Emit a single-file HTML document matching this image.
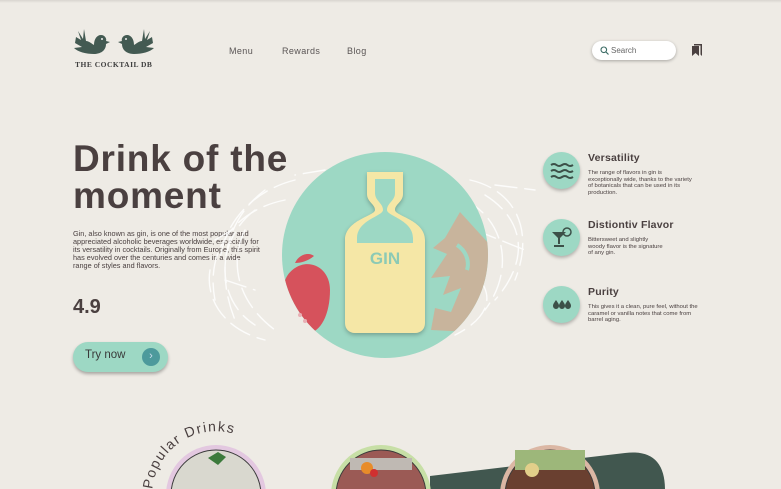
<!DOCTYPE html>
<html><head><meta charset="utf-8"><style>
*{margin:0;padding:0;box-sizing:border-box}
body{width:781px;height:489px;overflow:hidden;background:#eeebe5;font-family:"Liberation Sans",sans-serif;color:#4a4040;position:relative}
.abs{position:absolute}
.nav{font-size:9px;color:#5a5555;top:46px;letter-spacing:.4px}
h1{position:absolute;left:73px;top:140px;font-size:37px;line-height:37px;font-weight:bold;color:#4a4040;letter-spacing:.8px}
.desc{left:73px;top:230px;width:188px;font-size:7.3px;line-height:8px;color:#4a4040}
.feat h3{font-size:10.5px;font-weight:bold;color:#4a4040;margin-bottom:6px;letter-spacing:.2px;white-space:nowrap}
.feat p{font-size:5.9px;line-height:6.5px;color:#4a4040}
.ic{width:37px;height:37px;border-radius:50%;background:#9dd8c4;box-shadow:0 2px 3px rgba(0,0,0,.25)}
</style></head><body>
<div class="abs" style="left:0;top:0;width:781px;height:3px;background:linear-gradient(#d8d5d0,#eeebe5)"></div>
<svg class="abs" style="left:72px;top:27px" width="84" height="30" viewBox="0 0 84 30">
<g fill="#435a52">
<path d="M4 10 L9 13 L6 4 L11 12 L12 2 L14 14 C17 14 20 17 22 18 C22 12 25 8 29 8 C33 8 35 12 34 14 L38 15 L34 17 C34 24 28 27 22 27 C14 27 6 25 2 21 L10 20 L3 16 Z"/>
<path d="M80 10 L75 13 L78 4 L73 12 L72 2 L70 14 C67 14 64 17 62 18 C62 12 59 8 55 8 C51 8 49 12 50 14 L46 15 L50 17 C50 24 56 27 62 27 C70 27 78 25 82 21 L74 20 L81 16 Z"/>
</g><circle cx="30" cy="12" r="1" fill="#eee"/><circle cx="54" cy="12" r="1" fill="#eee"/></svg>
<div class="abs" style="left:75px;top:60px;font-family:'Liberation Serif',serif;font-weight:bold;font-size:7.5px;color:#3e3e3e;letter-spacing:.5px">THE COCKTAIL DB</div>
<div class="abs nav" style="left:229px">Menu</div>
<div class="abs nav" style="left:282px">Rewards</div>
<div class="abs nav" style="left:347px">Blog</div>
<div class="abs" style="left:592px;top:41px;width:84px;height:19px;border-radius:10px;background:#fff;box-shadow:0 1px 3px rgba(0,0,0,.3)"></div>
<svg class="abs" style="left:600px;top:46px" width="9" height="9"><circle cx="3.8" cy="3.8" r="2.8" fill="none" stroke="#3d6d66" stroke-width="1.1"/><path d="M6 6 L8.5 8.5" stroke="#3d6d66" stroke-width="1.2"/></svg>
<div class="abs" style="left:611px;top:46px;font-size:8px;color:#666">Search</div>
<svg class="abs" style="left:691px;top:43px" width="12" height="14"><path d="M3 1h8v12l-1.5-1.5V2.5H3z" fill="#4a4040"/><path d="M1 3h7v10l-3.5-3L1 13z" fill="#4a4040"/></svg>
<h1>Drink of the<br>moment</h1>
<div class="abs desc">Gin, also known as gin, is one of the most popular and appreciated alcoholic beverages worldwide, especially for its versatility in cocktails. Originally from Europe, this spirit has evolved over the centuries and comes in a wide range of styles and flavors.</div>
<div class="abs" style="left:73px;top:296px;font-size:20px;font-weight:bold;color:#4a4040">4.9</div>
<div class="abs" style="left:73px;top:342px;width:95px;height:30px;border-radius:15px;background:#9dd8c4;box-shadow:0 2px 3px rgba(0,0,0,.3)"></div>
<div class="abs" style="left:85px;top:349px;font-size:11.5px;color:#3a3a3a">Try now</div>
<div class="abs" style="left:142px;top:348px;width:18px;height:18px;border-radius:50%;background:#4d9a9c;color:#cde;font-size:11px;text-align:center;line-height:17px">›</div>
<svg class="abs" style="left:195px;top:150px" width="345" height="220" viewBox="0 0 345 220">
<defs><clipPath id="cc"><circle cx="190" cy="105" r="103"/></clipPath></defs>
<g fill="none" stroke="#fff" stroke-width="1.4" stroke-linecap="round" opacity=".85" stroke-dasharray="22 8">
<path d="M90 50 C40 60 10 100 20 150"/><path d="M70 40 C30 70 20 120 40 170"/><path d="M100 30 C60 40 30 70 25 110"/>
<path d="M15 120 C10 150 30 180 70 190"/><path d="M50 80 C35 110 40 150 80 180"/><path d="M130 20 L100 25"/>
<path d="M275 30 C320 40 340 80 320 130"/><path d="M270 50 C310 70 320 120 290 160"/><path d="M300 35 L340 40"/>
<path d="M285 130 C300 150 290 170 260 185"/><path d="M30 130 L60 140"/><path d="M280 80 L330 100"/><path d="M20 90 L45 75"/>
<path d="M60 60 C20 90 20 150 60 175"/><path d="M290 45 C330 70 335 110 300 150"/>
</g>
<circle cx="190" cy="105" r="103" fill="#9dd8c4"/>
<g clip-path="url(#cc)">
<path d="M100 118 C115 108 135 118 135 140 C135 165 125 185 110 183 C95 181 86 160 88 140 C89 128 94 122 100 118Z" fill="#d6525c"/>
<path d="M265 62 L250 88 L238 98 L252 104 L236 128 L255 126 L248 145 L266 138 L256 162 L240 158 L236 180 L275 182 L292 165 L295 95 Z" fill="#c8b49c"/>
<path d="M262 95 C270 100 275 110 272 120" stroke="#9dd8c4" stroke-width="4" fill="none"/>
</g>
<path d="M100 113 C104 104 114 102 119 106 C113 111 106 113 100 113Z" fill="#d6525c"/>
<circle cx="105" cy="165" r="2" fill="#e8b0b5"/><circle cx="110" cy="171" r="2" fill="#e8b0b5"/>
<g filter="drop-shadow(0 2px 2px rgba(0,0,0,.25))">
<path d="M172 22 h36 v22 c0 8 -8 10 -8 16 c0 6 30 10 30 30 v83 c0 6 -4 10 -10 10 h-60 c-6 0 -10 -4 -10 -10 v-83 c0 -20 30 -24 30 -30 c0 -6 -8 -8 -8 -16z" fill="#f5e7a6"/>
</g>
<path d="M180 29 h20 v14 c0 8 -8 10 -8 17 c0 6 26 10 26 28 v5 h-56 v-5 c0 -18 26 -22 26 -28 c0 -7 -8 -9 -8 -17z" fill="#9dd8c4"/>
<text x="190" y="114" text-anchor="middle" font-family="Liberation Sans" font-weight="bold" font-size="17" fill="#8ccab5">GIN</text>
</svg>
<div class="abs ic" style="left:543px;top:152px"></div>
<svg class="abs" style="left:550px;top:162px" width="24" height="18"><g fill="none" stroke="#3c5048" stroke-width="2"><path d="M1 3 q3 -2 5.5 0 t5.5 0 t5.5 0 t5.5 0"/><path d="M1 9 q3 -2 5.5 0 t5.5 0 t5.5 0 t5.5 0"/><path d="M1 15 q3 -2 5.5 0 t5.5 0 t5.5 0 t5.5 0"/></g></svg>
<div class="abs ic" style="left:543px;top:219px"></div>
<svg class="abs" style="left:551px;top:226px" width="24" height="22"><path d="M1 6 h14 l-7 7z M7 12 h2 v6 h-2z M3 19 h10 v2 h-10z" fill="#3c5048"/><circle cx="16" cy="6" r="4" fill="none" stroke="#3c5048" stroke-width="1.5"/></svg>
<div class="abs ic" style="left:543px;top:286px"></div>
<svg class="abs" style="left:552px;top:297px" width="20" height="14"><g fill="#3c5048"><path d="M4 3 c2 3 3 4 3 6 a3 3 0 0 1 -6 0 c0 -2 1 -3 3 -6z"/><path d="M10 3 c2 3 3 4 3 6 a3 3 0 0 1 -6 0 c0 -2 1 -3 3 -6z"/><path d="M16 3 c2 3 3 4 3 6 a3 3 0 0 1 -6 0 c0 -2 1 -3 3 -6z"/></g></svg>
<div class="abs feat" style="left:588px;top:152px"><h3>Versatility</h3><p style="width:108px">The range of flavors in gin is exceptionally wide, thanks to the variety of botanicals that can be used in its production.</p></div>
<div class="abs feat" style="left:588px;top:219px"><h3>Distiontiv Flavor</h3><p style="width:78px">Bittersweet and slightly woody flavor is the signature of any gin.</p></div>
<div class="abs feat" style="left:588px;top:286px"><h3>Purity</h3><p style="width:115px">This gives it a clean, pure feel, without the caramel or vanilla notes that come from barrel aging.</p></div>
<svg class="abs" style="left:130px;top:400px" width="560" height="89" viewBox="0 0 560 89">
<path d="M300 76 L495 53 Q535 48 535 90 L535 89 L300 89Z" fill="#41574f"/>
<defs><path id="arc" d="M25.9 116.9 A64 64 0 0 1 127 46"/></defs>
<text font-family="Liberation Sans" font-size="14" fill="#4a4040" letter-spacing="1.5"><textPath href="#arc" startOffset="28">Popular Drinks</textPath></text>
<circle cx="86" cy="95" r="50" fill="#e3c8e0"/><circle cx="86" cy="95" r="45" fill="#d9d8cf" stroke="#3b3b3b" stroke-width="1"/>
<path d="M78 58 l10 -6 l8 5 l-8 8z" fill="#3c7a3c"/>
<circle cx="251" cy="95" r="50" fill="#c7dfa6"/><circle cx="251" cy="95" r="45" fill="#9b5a55" stroke="#3b3b3b" stroke-width="1"/>
<path d="M220 58 h62 v12 h-62z" fill="#bfb9b3"/><circle cx="237" cy="68" r="6" fill="#e88c2a"/><circle cx="244" cy="73" r="4" fill="#d03030"/>
<circle cx="420" cy="95" r="50" fill="#dbb7a4"/><circle cx="420" cy="95" r="45" fill="#6a4030" stroke="#3b3b3b" stroke-width="1"/>
<path d="M385 50 h70 v20 h-70z" fill="#9db77a"/><circle cx="402" cy="70" r="7" fill="#e2cf8a"/>
</svg>
</body></html>
